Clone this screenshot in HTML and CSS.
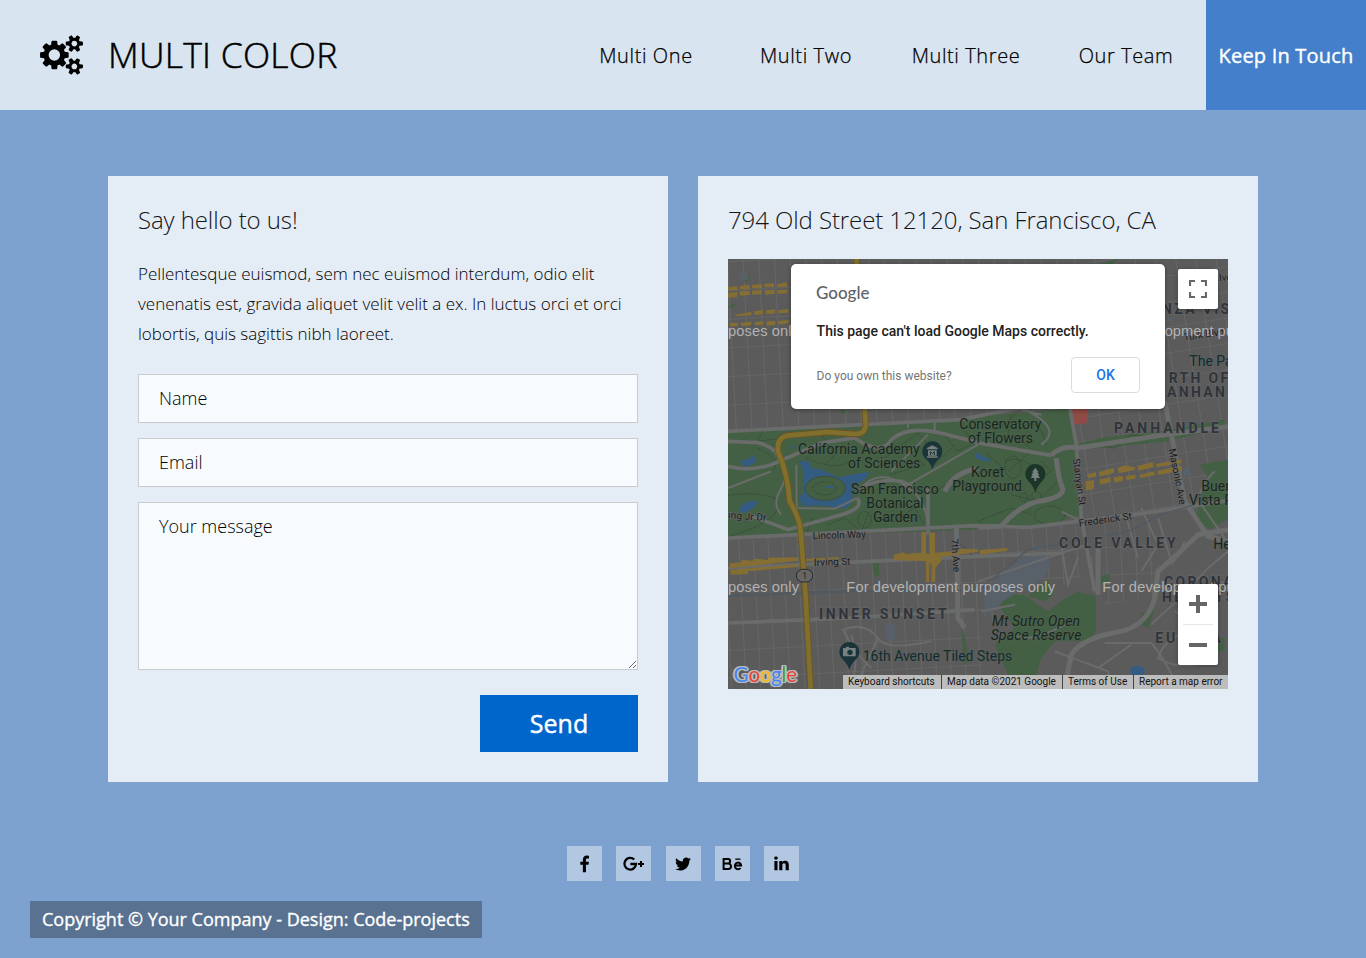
FILE: index.html
```html
<!DOCTYPE html>
<html lang="en">
<head>
<meta charset="utf-8">
<title>Multi Color</title>
<link rel="stylesheet" href="styles.css">
</head>
<body>
<header class="header">
  <a class="brand">
    <svg class="brand-icon" viewBox="0 0 1920 1792"><path d="M896 896q0-106-75-181t-181-75-181 75-75 181 75 181 181 75 181-75 75-181zm768 512q0-52-38-90t-90-38-90 38-38 90q0 53 37.5 90.5t90.5 37.5 90.5-37.5 37.5-90.5zm0-1024q0-52-38-90t-90-38-90 38-38 90q0 53 37.5 90.5t90.5 37.5 90.5-37.5 37.5-90.5zm-384 421v185q0 10-7 19.5t-16 10.5l-155 24q-11 35-32 76 34 48 90 115 7 11 7 20 0 12-7 19-23 30-82.5 89.5t-78.5 59.5q-11 0-21-7l-115-90q-37 19-77 31-11 108-23 155-7 24-30 24h-186q-11 0-20-7.5t-10-17.5l-23-153q-34-10-75-31l-118 89q-7 7-20 7-11 0-21-8-144-133-144-160 0-9 7-19 10-14 41-53t47-61q-23-44-35-82l-152-24q-10-1-17-9.5t-7-19.5v-185q0-10 7-19.5t16-10.5l155-24q11-35 32-76-34-48-90-115-7-11-7-20 0-12 7-20 22-30 82-89t79-59q11 0 21 7l115 90q34-18 77-32 11-108 23-154 7-24 30-24h186q11 0 20 7.5t10 17.5l23 153q34 10 75 31l118-89q8-7 20-7 11 0 21 8 144 133 144 160 0 8-7 19-12 16-42 54t-45 60q23 48 34 82l152 23q10 2 17 10.5t7 19.5zm640 533v140q0 16-149 31-12 27-30 52 51 113 51 138 0 4-4 7-122 71-124 71-8 0-46-47t-52-68q-20 2-30 2t-30-2q-14 21-52 68t-46 47q-2 0-124-71-4-3-4-7 0-25 51-138-18-25-30-52-149-15-149-31v-140q0-16 149-31 13-29 30-52-51-113-51-138 0-4 4-7 4-2 35-20t59-34 30-16q8 0 46 46.5t52 67.5q20-2 30-2t30 2q51-71 92-112l6-2q4 0 124 70 4 3 4 7 0 25-51 138 17 23 30 52 149 15 149 31zm0-1024v140q0 16-149 31-12 27-30 52 51 113 51 138 0 4-4 7-122 71-124 71-8 0-46-47t-52-68q-20 2-30 2t-30-2q-14 21-52 68t-46 47q-2 0-124-71-4-3-4-7 0-25 51-138-18-25-30-52-149-15-149-31v-140q0-16 149-31 13-29 30-52-51-113-51-138 0-4 4-7 4-2 35-20t59-34 30-16q8 0 46 46.5t52 67.5q20-2 30-2t30 2q51-71 92-112l6-2q4 0 124 70 4 3 4 7 0 25-51 138 17 23 30 52 149 15 149 31z"/></svg>
    <h1 class="brand-name">MULTI COLOR</h1>
  </a>
  <nav class="nav">
    <a class="nav-link">Multi One</a>
    <a class="nav-link">Multi Two</a>
    <a class="nav-link">Multi Three</a>
    <a class="nav-link">Our Team</a>
    <a class="nav-link nav-link-active">Keep In Touch</a>
  </nav>
</header>

<main class="contact">
  <section class="panel">
    <h2 class="panel-title">Say hello to us!</h2>
    <p class="intro">Pellentesque euismod, sem nec euismod interdum, odio elit venenatis est, gravida aliquet velit velit a ex. In luctus orci et orci lobortis, quis sagittis nibh laoreet.</p>
    <form class="form">
      <input class="field" type="text" placeholder="Name">
      <input class="field" type="text" placeholder="Email">
      <textarea class="field message" placeholder="Your message"></textarea>
      <button class="send" type="button">Send</button>
    </form>
  </section>

  <section class="panel">
    <h2 class="panel-title address">794 Old Street 12120, San Francisco, CA</h2>
    <div class="map">
      <svg class="map-canvas" viewBox="0 3 1500 1290">
        <defs>
          <pattern id="blocksA" width="47" height="86" patternUnits="userSpaceOnUse" patternTransform="translate(-3 10) rotate(-3)"><path d="M0 0V86M0 0H47" class="street"/></pattern>
          <pattern id="blocksB" width="60" height="76" patternUnits="userSpaceOnUse" patternTransform="translate(1040 20) rotate(-9)"><path d="M0 0V76M0 0H60" class="street"/></pattern>
          <pattern id="blocksC" width="44" height="83" patternUnits="userSpaceOnUse" patternTransform="translate(30 842) rotate(-3)"><path d="M0 0V83M0 0H44" class="street"/></pattern>
        </defs>
        <rect y="3" width="1500" height="1290" class="land"/>
        <rect y="3" width="1010" height="520" fill="url(#blocksA)"/>
        <path d="M1010 3H1500V740L1040 800Z" fill="url(#blocksB)"/>
        <path d="M0 845L1040 800L1110 930L760 1110V1293H0Z" fill="url(#blocksC)"/>
        <path d="M1110 800L1290 780L1310 1010L1130 1040Z" fill="url(#blocksC)"/>

        <!-- parks -->
        <path class="park" d="M0 518L700 480L1025 452L1040 570L1060 770L925 808L0 840Z"/>
        <path class="park" d="M1040 560L1130 538L1300 520L1490 484V508L1320 550L1100 572Z"/>
        <path class="park" d="M1415 620L1500 606V780L1450 814L1400 790L1416 720L1440 660Z"/>
        <path class="park" d="M818 1005L890 1012L960 1060L1010 1022L1048 1002L1103 1013V1120L1085 1150L980 1150L940 1200L915 1290H850L836 1240L800 1160L860 1110L818 1050ZM900 1015L962 965L976 1010L950 1030ZM1240 1065L1280 1052L1260 1110L1236 1098ZM1110 957L1144 948V972L1115 975ZM433 915H452L455 952L440 958ZM700 1100L712 1145L724 1210L706 1220ZM1110 20L1168 3L1160 15ZM42 52H64V68H46ZM0 145L25 136L15 152ZM1465 1140H1490V1180H1470ZM330 455H352V468H345Z"/>
        <path class="hospital" d="M20 1015L30 990L70 950L130 900L210 885L215 930L190 965L120 1000L60 1040L18 1078Z" transform="translate(750)"/>
        <path class="hospital" d="M470 1100H502V1146H475ZM1312 180H1333V190H1312ZM1365 625L1385 632L1392 650L1370 657ZM35 45H60V65H35ZM910 865L938 862V875H910Z"/>
        <path class="red" d="M1025 452H1078L1080 494L1032 502Z"/>

        <!-- paths through the park -->
        <g class="trail">
          <path d="M0 712Q80 700 140 720Q180 770 50 820L0 837M105 520L85 550L185 538M90 570Q170 610 130 640L80 660M235 600Q320 640 360 610M280 530L320 590L290 620M470 600Q520 560 580 520M540 505L590 545L620 620L680 560M640 520L690 580L745 550M485 650L590 620L540 580M620 700Q680 660 745 680M300 800L350 780L400 820L420 770M252 780L235 830M440 780L500 790L560 750L588 800M850 470L840 530L900 560M830 610Q880 590 930 640M780 590L820 625L790 660M870 520Q930 460 955 560M940 610L970 640L910 680M840 640L910 580L985 590M850 710L930 730L1000 660M750 790L850 750L910 770M1100 560L1160 570L1210 530L1300 540M740 900L700 860M700 510L750 560L840 490L870 460"/>
          <ellipse cx="965" cy="771" rx="45" ry="27"/>
          <ellipse cx="855" cy="628" rx="24" ry="33"/><ellipse cx="410" cy="785" rx="20" ry="24"/>
          <circle cx="888" cy="718" r="12"/><circle cx="925" cy="714" r="14"/>
        </g>

        <!-- water -->
        <path class="water" d="M215 610L240 608L252 630L280 635L330 658L400 645L425 642L415 660L376 686L372 735L350 752L280 742L220 744L214 712L225 710L228 650ZM35 610L60 604L75 590L86 606L72 620L50 626ZM33 752Q55 720 90 733Q75 762 35 765ZM185 562L205 568L200 575ZM740 582L788 605L784 613L742 600Z"/>
        <ellipse class="island" cx="292" cy="691" rx="60" ry="36"/>
        <ellipse class="trail" cx="290" cy="691" rx="35" ry="20"/>
        <path class="water" d="M290 683L320 687L316 692L294 690Z"/>
        <ellipse class="water" cx="1228" cy="1239" rx="22" ry="16"/>

        <!-- roads -->
        <g class="road thin">
          <path d="M205 620L206 750L320 752L388 720M130 570Q195 620 160 690Q130 740 160 770M0 690L130 640M390 700Q450 620 540 690Q595 720 600 810M540 680L750 560M490 640L600 530M540 490V510M620 485V520M940 470L880 455M880 450Q1010 510 940 560M1000 760L1060 790M1460 640Q1400 700 1420 740L1490 840M1330 1010Q1400 980 1440 930L1500 880M1270 1100Q1340 1030 1400 990L1500 970M430 1230Q380 1190 345 1115Q410 1090 450 1140Q470 1180 610 1150M370 1130Q400 1230 360 1290M450 1140L390 1270M860 1130Q900 1160 1010 1100M980 1180L1140 1240L1150 1290M1130 1155H1270Q1310 1200 1350 1290M1210 1160L1110 1230M1450 1120Q1320 1110 1290 1200Q1360 1240 1440 1210M1340 1060L1470 1130M1290 980Q1380 1020 1450 1060M1330 920Q1360 880 1370 850M1360 1130Q1400 1100 1370 1080M1380 1190Q1410 1140 1460 1180"/>
          <path d="M750 970L1000 885L1080 860M760 1060L860 1040M1000 861L1020 980L1050 900M1290 780L1330 910M1190 760L1230 900M1240 750L1290 860L1240 940"/>
        </g>
        <g class="road medium">
          <path d="M0 520L700 485L1010 420M0 840L740 803L900 808L1220 770L1500 728M0 550L90 554Q150 570 155 610M0 625Q60 642 130 620L280 555L380 540Q460 595 490 545Q540 500 650 528L760 556L970 592M1018 410L1045 560L1060 780L1100 1000M600 690V830M0 930L750 895L1000 885M0 1095L370 1080L740 1055M400 690Q450 660 520 670L550 685M388 720Q410 750 340 770L180 815L60 770"/>
        </g>
        <g class="road wide">
          <path d="M970 592Q1000 560 1050 570L1310 530L1500 506M985 600Q990 660 1005 695Q1000 720 930 730Q870 745 820 805L750 808M650 700Q680 640 750 632M1110 835L1110 1010M1500 815L1410 830Q1370 870 1290 940L1280 1020Q1260 1100 1180 1120Q1060 1140 1030 1190L1010 1290M1310 430L1370 730L1440 835L1500 850M685 800L690 1080L710 1110"/>
        </g>
        <path class="rail" d="M0 1015L400 1000L750 998L900 875L1200 820L1300 770L1400 740M0 1011L400 995"/>

        <!-- shopping streets -->
        <g class="shops">
          <path d="M0 87L28 85V97H0ZM35 83L65 81V94H35ZM72 80L102 78V91H72ZM109 77L138 76V88H109ZM147 78L177 73V86L148 88ZM0 105L28 102V117L0 120ZM35 100L65 98V111L36 113ZM72 98L102 96V108L73 110ZM110 97L140 95V107L112 110ZM148 96L178 95V105L150 108ZM22 170L70 162V172L22 175ZM77 160L105 156V169L80 171ZM114 157L142 154V167H114ZM150 157L182 153V164L152 166ZM5 196L30 194V205H6ZM38 194L70 191V202L40 205ZM80 192L106 190V200L82 202ZM115 190L142 188V200L116 204ZM150 189L182 186V195L152 200Z"/>
          <path d="M1077 650L1104 642V656L1080 660ZM1112 642L1158 630V644L1115 656ZM1169 630L1190 622L1220 628V636L1172 646ZM1228 624L1276 612V628L1232 638ZM1284 618L1360 604V616L1286 628ZM1073 670L1098 666V692L1074 698ZM1115 664L1148 658V672L1116 680ZM1156 658L1185 654V668L1160 674ZM1193 654L1222 650V662L1196 666ZM1234 650L1280 640V652L1236 660ZM1288 638L1362 624V638L1290 650Z"/>
          <path d="M5 916L40 913V905L75 908L80 902L120 906V899L210 898V908L90 922L6 930ZM6 936L210 918V927L60 940V948L8 950ZM233 902L333 897V903L235 910ZM497 890L530 882V888L580 884V822H594V886L605 888V824H621V884L690 878V872L750 874V882L640 896V908L622 930V972H612V918L604 915V972H594V910L498 906ZM755 876L838 870V878L755 890Z"/>
        </g>
        <path class="highway-edge" d="M385 3L410 450L413 500Q412 530 380 528L300 522L185 532Q145 535 150 580Q180 650 185 730Q215 780 218 820L232 1000L248 1293"/>
        <path class="highway" d="M385 3L410 450L413 500Q412 530 380 528L300 522L185 532Q145 535 150 580Q180 650 185 730Q215 780 218 820L232 1000L248 1293"/>

        <rect x="205" y="934" width="49" height="38" rx="19" class="shield"/>
        <text x="230" y="962" text-anchor="middle" class="street-name route">1</text>

        <!-- labels -->
        <g class="place">
          <text x="210" y="588" textLength="365">California Academy</text>
          <text x="360" y="630" textLength="217">of Sciences</text>
          <text x="369" y="708" textLength="263">San Francisco</text>
          <text x="415" y="749" textLength="172">Botanical</text>
          <text x="435" y="792" textLength="134">Garden</text>
          <text x="694" y="513" textLength="246">Conservatory</text>
          <text x="720" y="555" textLength="195">of Flowers</text>
          <text x="729" y="656" textLength="100">Koret</text>
          <text x="673" y="699" textLength="209">Playground</text>
          <text x="1420" y="699">Buena</text>
          <text x="1383" y="741">Vista Park</text>
          <text x="1456" y="874">Height</text>
          <text class="teal" x="1384" y="323">The Park</text>
          <text class="teal" x="404" y="1209" textLength="449">16th Avenue Tiled Steps</text>
          <text class="italic" x="792" y="1104" textLength="264">Mt Sutro Open</text>
          <text class="italic" x="788" y="1146" textLength="272">Space Reserve</text>
        </g>
        <g class="district">
          <text x="1158" y="525" textLength="322">PANHANDLE</text>
          <text x="993" y="870" textLength="357">COLE VALLEY</text>
          <text x="273" y="1083" textLength="390">INNER SUNSET</text>
          <text x="1302" y="168">NZA VISTA</text>
          <text x="1322" y="376">RTH OF</text>
          <text x="1317" y="417">ANHANDLE</text>
          <text x="1308" y="986">CORONA</text>
          <text x="1302" y="1032">HEIGHTS</text>
          <text x="1282" y="1155" textLength="204">EUREKA</text>
        </g>
        <g class="street-name">
          <text transform="translate(0 781) rotate(4)" textLength="115">ing Jr Dr</text>
          <text transform="translate(254 844) rotate(-2)" textLength="160">Lincoln Way</text>
          <text transform="translate(258 924) rotate(-2)" textLength="110">Irving St</text>
          <text transform="translate(669 843) rotate(86)" textLength="100">7th Ave</text>
          <text transform="translate(1034 603) rotate(82)" textLength="142">Stanyan St</text>
          <text transform="translate(1322 574) rotate(79)" textLength="170">Masonic Ave</text>
          <text transform="translate(1054 806) rotate(-8)" textLength="160">Frederick St</text>
          <text transform="translate(1368 248) rotate(-8)">Turk Blvd</text>
          <text transform="translate(1474 70) rotate(-5)">Ivory</text>
        </g>

        <!-- place markers -->
        <path class="pin-teal" d="M613 634Q608 616 594 603A30 30 0 1 1 632 603Q618 616 613 634ZM364 1236Q359 1218 345 1205A30 30 0 1 1 383 1205Q369 1218 364 1236Z"/>
        <path class="pin-green" d="M922 704Q917 685 903 671A30 30 0 1 1 941 671Q927 685 922 704Z"/>
        <path class="glyph" d="M597 570L613 562L629 570V574H597ZM600 577H626V593H600ZM597 595H629V599H597Z"/>
        <path class="glyph-line" d="M607 591V581L613 587L619 581V591"/>
        <path class="glyph" d="M922 629L932 643H928L934 652H930L936 660H925V669H919V660H908L914 652H910L916 643H912ZM345 1170H354V1166H363V1170H383V1195H345Z"/>
        <circle class="lens" cx="366" cy="1183" r="8"/>

        <g class="watermark">
          <text x="0" y="235" textLength="213">poses only</text>
          <text x="1310" y="235">opment purposes</text>
          <text x="0" y="1003" textLength="213">poses only</text>
          <text x="355" y="1003" textLength="626">For development purposes only</text>
          <text x="1123" y="1003" textLength="626">For development purposes only</text>
        </g>
        <text class="google-color" x="17" y="1272" textLength="190"><tspan fill="#4285f4">G</tspan><tspan fill="#ea4335">o</tspan><tspan fill="#fbbc05">o</tspan><tspan fill="#4285f4">g</tspan><tspan fill="#34a853">l</tspan><tspan fill="#ea4335">e</tspan></text>
      </svg>

      <div class="dialog">
        <span class="dialog-logo">Google</span>
        <p class="dialog-text">This page can't load Google Maps correctly.</p>
        <div class="dialog-row"><a class="dialog-link">Do you own this website?</a><button class="ok" type="button">OK</button></div>
      </div>
      <button class="control fullscreen" type="button"><svg viewBox="0 0 18 18" width="18" height="18"><path d="M1 6V1H6M12 1H17V6M17 12V17H12M6 17H1V12"/></svg></button>
      <div class="control zoom">
        <svg viewBox="0 0 18 18" width="18" height="18"><path d="M0 9H18M9 0V18"/></svg>
        <i class="zoom-line"></i>
        <svg viewBox="0 0 18 18" width="18" height="18"><path d="M0 9H18"/></svg>
      </div>
      <div class="attribution"><span class="w1">Keyboard shortcuts</span><span class="w2">Map data ©2021 Google</span><span class="w3">Terms of Use</span><span class="w4">Report a map error</span></div>
    </div>
  </section>
</main>

<footer class="footer">
  <div class="social">
    <a class="social-link"><svg viewBox="0 0 1792 1792"><path transform="translate(-50 60)" d="M1343 12v264h-157q-86 0-116 36t-30 108v189h293l-39 296h-254v759h-306v-759h-255v-296h255v-218q0-186 104-288.5t277-102.5q147 0 228 12z"/></svg></a>
    <a class="social-link"><svg class="wide-icon" viewBox="0 0 23 18"><path class="icon-stroke" d="M12.2 4.5A5.8 5.8 0 1 0 14 9H8.4"/><path d="M18 6h2v2h2v2h-2v2h-2v-2h-2V8h2z"/></svg></a>
    <a class="social-link"><svg viewBox="0 0 1792 1792"><path d="M1684 408q-67 98-162 167 1 14 1 42 0 130-38 259.5t-115.5 248.5-184.5 210.5-258 146-323 54.5q-271 0-496-145 35 4 78 4 225 0 401-138-105-2-188-64.5t-114-159.5q33 5 61 5 43 0 85-11-112-23-185.5-111.5t-73.5-205.5v-4q68 38 146 41-66-44-105-115t-39-154q0-88 44-163 121 149 294.5 238.5t371.5 99.5q-8-38-8-74 0-134 94.5-228.5t228.5-94.5q140 0 236 102 109-21 205-78-37 115-142 178 93-10 186-50z"/></svg></a>
    <a class="social-link"><svg class="wide-icon" viewBox="0 0 23 18"><path class="icon-stroke be-stroke" d="M2.6 4.1H7A2.1 2.2 0 0 1 7 8.6H2.6H7.4A2.6 2.6 0 0 1 7.4 13.9H2.6Z"/><path class="icon-stroke be-stroke" d="M13.6 10.6H20.2A3.2 3.3 0 1 0 19.5 13"/><path d="M14.3 3.5h5.2v1.3h-5.2z"/></svg></a>
    <a class="social-link"><svg class="linkedin" viewBox="0 0 1792 1792"><path d="M477 625v991h-330v-991h330zm21-306q1 73-50.5 122t-135.5 49h-2q-82 0-132-49t-50-122q0-74 51.5-122.5t134.5-48.5 133 48.5 51 122.5zm1166 729v568h-329v-530q0-105-40.5-164.5t-126.5-59.5q-63 0-105.5 34.5t-63.5 85.5q-11 30-11 81v553h-329q2-399 2-647t-1-296l-1-48h329v144h-2q20-32 41-56t56.5-52 87-43.5 114.5-15.5q171 0 275 113.5t104 332.5z"/></svg></a>
  </div>
  <p class="copyright">Copyright © Your Company - Design: Code-projects</p>
</footer>
</body>
</html>
```
FILE: styles.css
```css
* { box-sizing: border-box; }
body {
  margin: 0;
  height: 958px;
  overflow: hidden;
  background: #7ea2d0;
  color: #000;
  font-family: "Open Sans", sans-serif;
  font-weight: 300;
}
h1, h2, p { margin: 0; font-weight: 300; }

.header { display: flex; justify-content: space-between; height: 110px; background: #d8e4f0; }
.brand { display: flex; align-items: center; padding-left: 40px; gap: 25px; }
.brand-icon { width: 43px; height: 40px; }
.brand-name { padding-bottom: 2px; font-size: 35.5px; font-weight: 300; line-height: 50px; letter-spacing: .25px; white-space: nowrap; -webkit-text-stroke: .5px #000; }
.nav { display: flex; }
.nav-link {
  display: flex; align-items: center; justify-content: center;
  width: 160px; font-size: 20px; font-weight: 300; letter-spacing: .6px; -webkit-text-stroke: .25px #000;
}
.nav-link-active { background: #437fcb; color: #fff; font-weight: 400; letter-spacing: .2px; -webkit-text-stroke: .4px #fff; }

.contact { display: grid; grid-template-columns: 560px 560px; gap: 30px; justify-content: center; margin-top: 66px; }
.panel { height: 606px; padding: 29px 30px 30px; background: #e4ecf6; }
.panel-title { color: #151515; font-size: 24px; line-height: 29px; letter-spacing: -.09px; white-space: nowrap; }
.address { margin-bottom: 25px; }
.intro { margin-top: 25px; font-size: 17px; line-height: 30px; }
.form { display: flex; flex-direction: column; gap: 15px; margin-top: 25px; }
.field {
  display: block; width: 500px; height: 49px; padding: 0 20px 2px;
  border: 1px solid #c8cccf; border-radius: 0; background: #f7fbfd;
  font: 300 18px "Open Sans", sans-serif;
}
.field::placeholder { color: #000; opacity: 1; }
.message { height: 168px; padding-top: 11px; }
.send {
  align-self: flex-end; width: 158px; height: 57px; margin-top: 10px; padding: 0 0 2px;
  border: 0; background: #06c; color: #fff; font: 400 25px "Open Sans", sans-serif; -webkit-text-stroke: .45px #fff;
}

.map { position: relative; width: 500px; height: 430px; overflow: hidden; font-family: Roboto, sans-serif; font-weight: 400; }
.map-canvas { display: block; width: 500px; height: 430px; }
.land { fill: #5b5b5b; }
.street { stroke: #686868; stroke-width: 5; fill: none; }
.park { fill: #446044; }
.hospital { fill: #58616a; }
.red { fill: #8f4b45; }
.water { fill: #345b82; }
.island { fill: #446044; stroke: #3c503a; stroke-width: 3; }
.trail { fill: none; stroke: #354d37; stroke-width: 3; stroke-dasharray: 8 3; }
.road { fill: none; stroke: #6a6b6b; }
.thin { stroke-width: 6; }
.medium { stroke-width: 11; }
.wide { stroke-width: 15; }
.rail { fill: none; stroke: #505960; stroke-width: 4; }
.shops { fill: #846e33; }
.highway-edge { fill: none; stroke: #6f5421; stroke-width: 19; }
.highway { fill: none; stroke: #81702d; stroke-width: 14; }
.shield { fill: #666; stroke: #282828; stroke-width: 3; }
.place { fill: #17261d; font-size: 42px; paint-order: stroke; stroke: #5b645b; stroke-width: 4; stroke-opacity: .5; }
.teal { fill: #112c30; }
.italic { font-style: italic; }
.district { fill: #30343a; font-size: 42px; font-weight: 700; letter-spacing: 7px; paint-order: stroke; stroke: #666; stroke-width: 4; }
.street-name { fill: #1c1c1c; font-size: 30px; paint-order: stroke; stroke: #686868; stroke-width: 4; }
.route { font-size: 26px; }
.pin-teal { fill: #1b3439; }
.pin-green { fill: #1c3529; }
.glyph { fill: #77817f; }
.glyph-line { fill: none; stroke: #1b3439; stroke-width: 3; }
.lens { fill: #1b3439; }
.watermark { fill: #b2b2b2; font: 44px "Liberation Sans", sans-serif; }
.google-color {
  font: 400 61px Lato, sans-serif;
  filter: drop-shadow(4px 0 0 #bbb) drop-shadow(-4px 0 0 #bbb) drop-shadow(0 3px 0 #bbb) drop-shadow(0 -3px 0 #bbb);
}

.dialog {
  position: absolute; left: 63px; top: 5px; width: 374px; height: 145px; padding: 0 25px;
  border-radius: 5px; background: #fff; box-shadow: 0 1px 4px rgba(0, 0, 0, .4);
}
.dialog-logo { display: block; padding-top: 18px; color: #5f6368; font: 500 17px/21px Lato, sans-serif; }
.dialog-text { margin: 18px 0 0 .6px; color: #212121; font-size: 14px; font-weight: 500; line-height: 20px; white-space: nowrap; }
.dialog-row { display: flex; justify-content: space-between; align-items: center; margin-top: 16px; }
.dialog-link { padding: 2px 0 0 .6px; color: #757575; font-size: 12px; }
.ok { width: 69px; height: 36px; padding: 0; border: 1px solid #dadce0; border-radius: 4px; background: #fff; color: #1a73e8; font: 500 14px Roboto, sans-serif; }
.control { position: absolute; right: 10px; width: 40px; border: 0; border-radius: 2px; background: #fff; box-shadow: 0 1px 4px rgba(0, 0, 0, .3); display: flex; align-items: center; justify-content: center; }
.control path { fill: none; stroke: #666; stroke-width: 2.2; }
.fullscreen { top: 10px; height: 40px; padding: 0; }
.zoom { bottom: 24px; height: 81px; flex-direction: column; gap: 11px; }
.zoom path { stroke-width: 4; }
.zoom-line { width: 30px; height: 1px; background: #e6e6e6; }
.attribution { position: absolute; right: 0; bottom: 0; display: flex; height: 14px; color: #111; font-size: 10px; line-height: 14px; white-space: nowrap; }
.attribution span { padding-left: 5px; background: #bdbdbd; }
.attribution span + span { border-left: 1px solid #444; }
.w1 { width: 98px; }
.w2 { width: 121px; }
.w3 { width: 71px; }
.w4 { width: 95px; }

.footer { display: flex; flex-direction: column; align-items: center; margin-top: 64px; }
.social { display: flex; gap: 14.25px; }
.social-link { display: flex; align-items: center; justify-content: center; width: 35px; height: 35px; background: #b1c7e2; }
.social-link svg { width: 18px; height: 18px; }
.social-link .wide-icon { width: 23px; }
.social-link .linkedin { width: 17px; height: 17px; }
.icon-stroke { fill: none; stroke: #000; stroke-width: 2.3; }
.be-stroke { stroke-width: 2; }
.copyright { align-self: flex-start; width: 452px; margin: 20px 0 0 30px; padding: 0 12px; background: #597291; color: #fff; font-size: 18px; font-weight: 400; line-height: 37px; white-space: nowrap; -webkit-text-stroke: .35px #fff; }
```
